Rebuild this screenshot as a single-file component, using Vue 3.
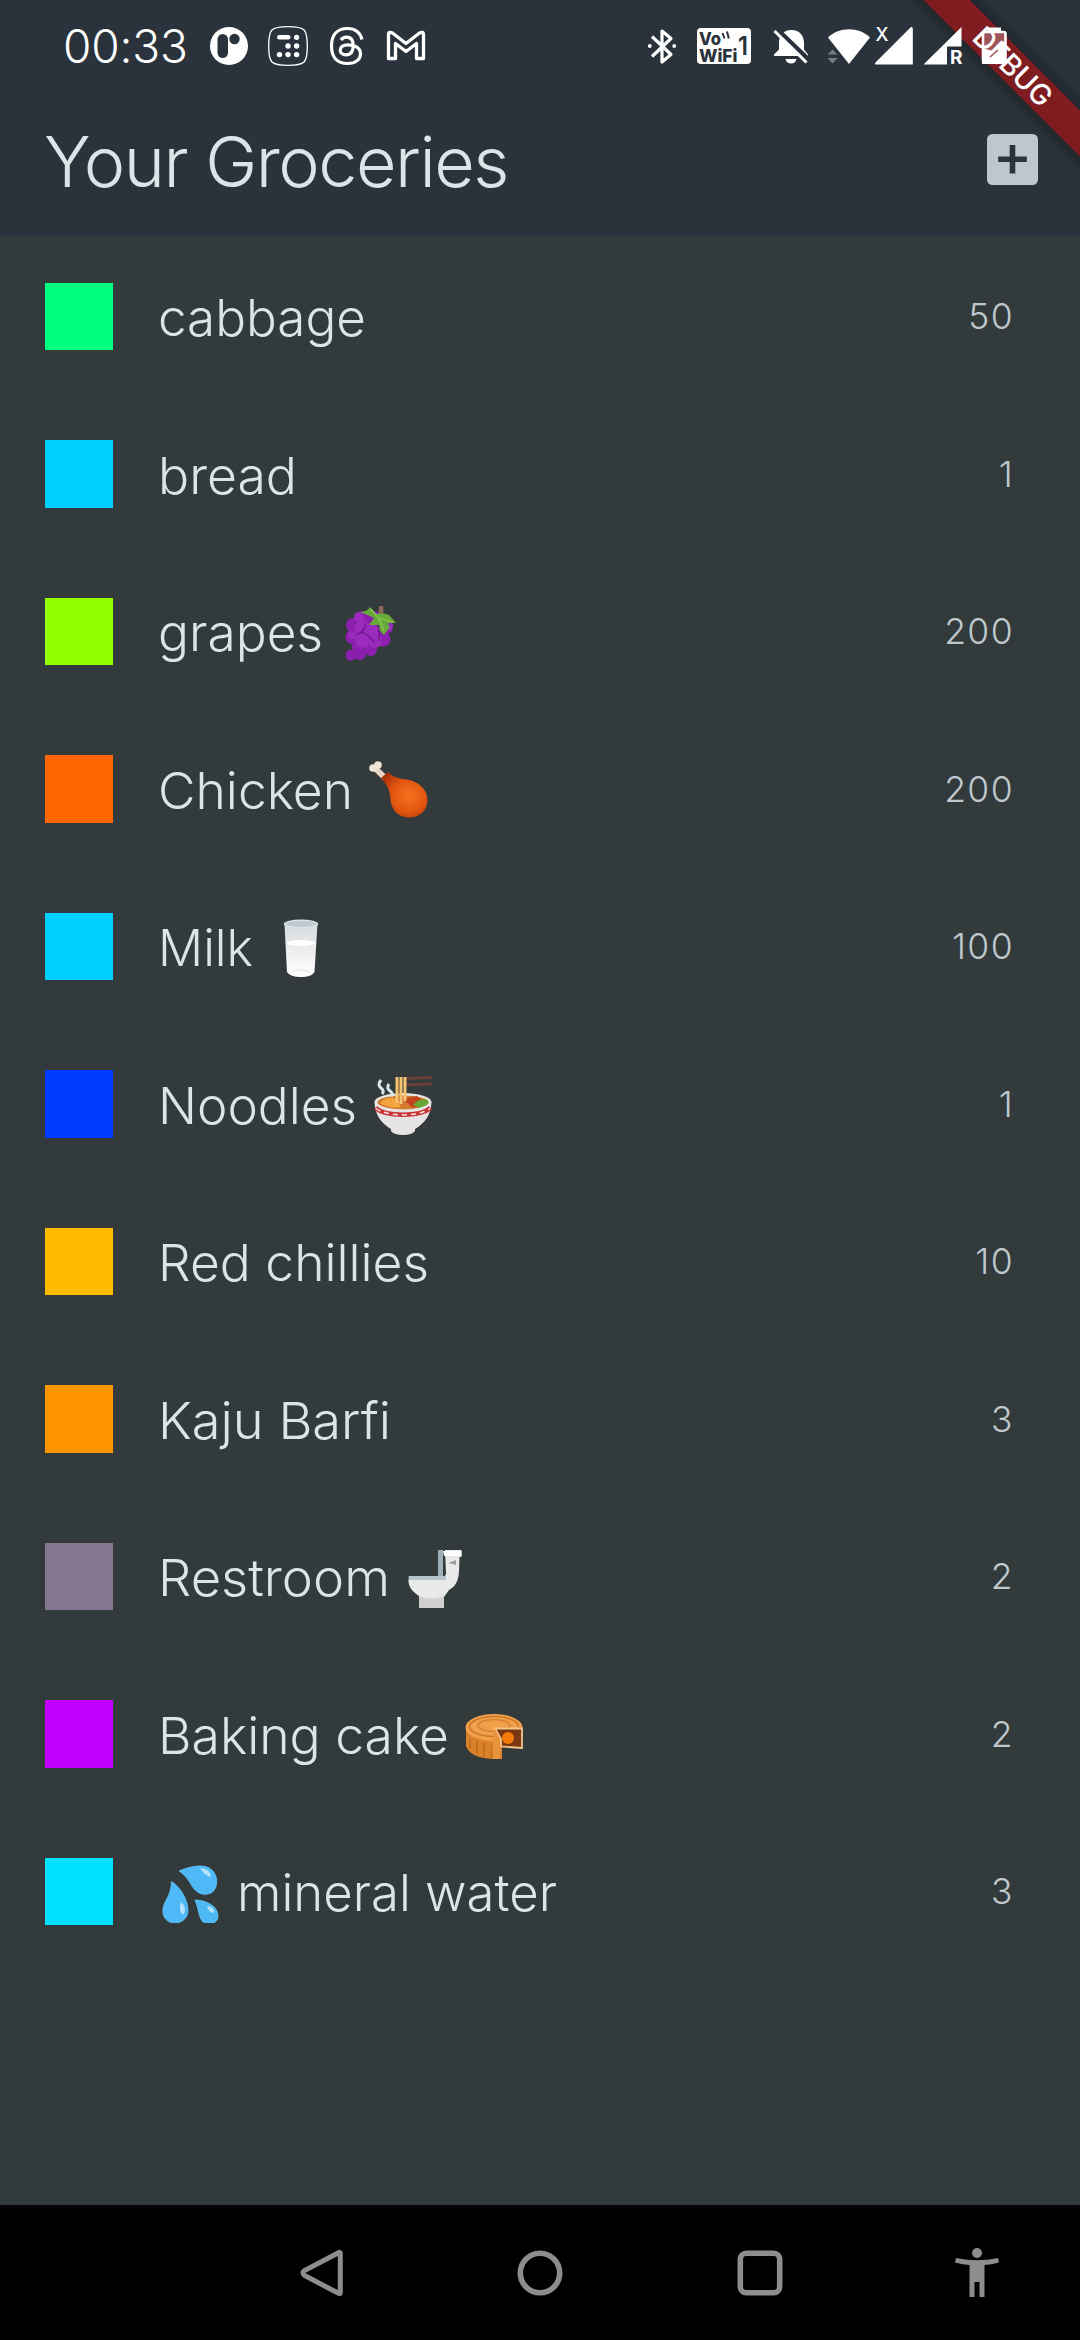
<script setup>
const groceries = [
  { name: 'cabbage', qty: 50, color: '#00ff80', width: 208 },
  { name: 'bread', qty: 1, color: '#00d0ff', width: 139 },
  { name: 'grapes', qty: 200, color: '#91ff00', width: 165, slot: 183.5, icon: 'grapes' },
  { name: 'Chicken', qty: 200, color: '#ff6600', width: 195, slot: 211.5, icon: 'chicken' },
  { name: 'Milk', qty: 100, color: '#00d0ff', width: 95, slot: 113.5, icon: 'milk' },
  { name: 'Noodles', qty: 1, color: '#003cff', width: 199, slot: 215.5, icon: 'noodles' },
  { name: 'Red chillies', qty: 10, color: '#ffbb00', width: 271 },
  { name: 'Kaju Barfi', qty: 3, color: '#ff9500', width: 233 },
  { name: 'Restroom', qty: 2, color: '#857690', width: 232, slot: 248.5, icon: 'toilet' },
  { name: 'Baking cake', qty: 2, color: '#bf00ff', width: 291, slot: 307.5, icon: 'cake' },
  { name: 'mineral water', qty: 3, color: '#00e1ff', width: 320, icon: 'drops', lead: true },
]
</script>

<template>
  <div class="screen">
    <div class="banner"><span>DEBUG</span></div>

    <header class="top">
      <div class="status">
        <span class="time">00:33</span>
        <div class="notes">
          <svg width="40" height="44" viewBox="209 24 40 44">
            <circle cx="229" cy="46" r="19" fill="#fff" />
            <rect x="217.500" y="34" width="10.500" height="24" rx="5.250" fill="#2a333b" />
            <circle cx="234.500" cy="39" r="5.200" fill="#2a333b" />
          </svg>
          <svg width="42" height="44" viewBox="267 24 42 44">
            <path d="M268.700 46C268.700 29 271 26.600 288 26.600S307.300 29 307.300 46 305 65.400 288 65.400 268.700 63 268.700 46Z" fill="none" stroke="#fff" stroke-width="1.300" />
            <g fill="#fff">
              <rect x="277" y="35" width="13.500" height="4.600" rx="2.300" />
              <circle cx="296.600" cy="37.300" r="2.600" />
              <circle cx="288" cy="46" r="2.700" /><circle cx="296.600" cy="46" r="2.700" />
              <circle cx="279.500" cy="54.600" r="2.700" /><circle cx="288" cy="54.600" r="2.700" /><circle cx="296.600" cy="54.600" r="2.700" />
            </g>
          </svg>
          <svg width="40" height="44" viewBox="327 24 40 44">
            <path d="M362 39.500C360 32 355 28.500 347.500 28.500 337 28.500 331.500 35 331.500 46S337 63.500 347.500 63.500C356 63.500 360.500 59 360.500 54 360.500 47.500 354 44.800 348 44.800 343 44.800 340.200 47 340.200 50.200 340.200 53 342.800 54.800 346 54.800 351 54.800 353.200 51.500 353.200 45.500 353.200 40 351 37.200 346.500 37.200 344 37.200 342.200 38.200 341 40" fill="none" stroke="#fff" stroke-width="3.200" />
          </svg>
          <svg width="42" height="44" viewBox="385 24 42 44">
            <path d="M388.500 58.500V34.500Q388.500 31 392.500 33L406 43.500 419.500 33Q423.500 31 423.500 34.500V58.500H416.500V43.500L406 51.500 395.500 43.500V58.500Z" fill="none" stroke="#fff" stroke-width="3.300" stroke-linejoin="round" />
          </svg>
        </div>
        <div class="system">
          <svg width="30" height="44" viewBox="647 24 30 44">
            <path d="M652 36.500 671 54.500 662 62V31L671 38.500 652 56.500" fill="none" stroke="#fff" stroke-width="3.200" stroke-linejoin="round" />
            <circle cx="649.800" cy="46" r="1.900" fill="#fff" /><circle cx="674.200" cy="46" r="1.900" fill="#fff" />
          </svg>
          <svg width="56" height="44" viewBox="696 24 56 44">
            <rect x="697" y="28" width="54" height="36" rx="4" fill="#fff" />
            <g fill="#2a333b" font-family="Inter, sans-serif" font-weight="800">
              <text x="699" y="44.500" font-size="18" textLength="22" lengthAdjust="spacingAndGlyphs">Vo</text>
              <text x="699" y="61.500" font-size="18" textLength="38.500" lengthAdjust="spacingAndGlyphs">WiFi</text>
              <text x="738" y="54.500" font-size="25" textLength="10" lengthAdjust="spacingAndGlyphs" font-weight="600">1</text>
            </g>
            <path d="M722.500 33l2 5.500M727 31.500l1.800 7" stroke="#2a333b" stroke-width="2" />
          </svg>
          <svg width="38" height="44" viewBox="772 24 38 44">
            <path d="M774 56V54.500L779 49.500V43C779 35.500 783 30 791.500 30S804 36 804 43V49.500L808 54.500V56Z" fill="#fff" />
            <path d="M785.500 59h11c-.8 6-10.200 6-11 0Z" fill="#fff" />
            <path d="M777 29 809 60" stroke="#2a333b" stroke-width="4.500" />
            <path d="M774.500 31 806.500 62.500" stroke="#fff" stroke-width="3" />
          </svg>
          <svg width="44" height="44" viewBox="827 24 44 44">
            <path d="M828 37.500C839 26.500 859 26.500 870 37.500L849 64Z" fill="#fff" />
            <path d="M827.500 54.500 832.500 49.500 837.500 54.500ZM827.500 58 832.500 63.500 837.500 58Z" fill="#777d82" />
          </svg>
          <svg width="40" height="44" viewBox="874 24 40 44">
            <path d="M911 27Q912.800 26.500 912.800 29V64.500H877Q873.500 64.500 876 62Z" fill="#fff" />
            <text x="875.500" y="41" font-family="Inter, sans-serif" font-size="18.500" font-weight="500" fill="#fff" textLength="13" lengthAdjust="spacingAndGlyphs">X</text>
          </svg>
          <svg width="42" height="44" viewBox="922 24 42 44">
            <path d="M961.500 27V46.500H947V64.500H923.500Z" fill="#fff" />
            <text x="950" y="64" font-family="Inter, sans-serif" font-size="18.500" font-weight="700" fill="#fff" textLength="12.500" lengthAdjust="spacingAndGlyphs">R</text>
          </svg>
          <svg width="30" height="44" viewBox="979 24 30 44">
            <path d="M988 27.500h13v4h-13z" fill="#fff" />
            <rect x="983" y="32" width="22.500" height="30.500" rx="2" fill="#fff" fill-opacity=".25" stroke="#fff" stroke-width="2.600" />
            <path d="M982 48 993 51 999 43 1006 41V64H982Z" fill="#fff" />
            <path d="M990 57 998 50" stroke="#9c5055" stroke-width="1.600" />
          </svg>
        </div>
      </div>
      <div class="appbar">
        <h1>Your Groceries</h1>
        <svg class="add" width="51" height="51" viewBox="0 0 51 51">
          <rect width="51" height="51" rx="5.500" fill="#c0c7cc" />
          <path d="M25.500 11V39.500M11.200 25.300H39.800" stroke="#2a333b" stroke-width="5.600" />
        </svg>
      </div>
    </header>

    <main class="list">
      <div v-for="item in groceries" :key="item.name" class="row" :class="{ lead: item.lead }">
        <i class="swatch" :style="{ background: item.color }"></i>
        <svg class="name" :width="item.slot || item.width" height="70">
          <text x="0" y="54.500" :textLength="item.width" lengthAdjust="spacingAndGlyphs">{{ item.name }}</text>
        </svg>
        <svg v-if="item.icon === 'grapes'" class="emoji" viewBox="0 0 60 60">
          <g fill="#8d1fae">
            <circle cx="12" cy="22" r="7" /><circle cx="21" cy="15" r="7" /><circle cx="33" cy="16" r="8" /><circle cx="45" cy="24" r="7" />
            <circle cx="12" cy="34" r="7.500" /><circle cx="18" cy="43" r="7" /><circle cx="10" cy="52" r="5.500" /><circle cx="30" cy="47" r="6" /><circle cx="42" cy="36" r="7.500" /><circle cx="19" cy="51" r="6" />
          </g>
          <g fill="#9b2bbd">
            <circle cx="21" cy="25" r="7.500" /><circle cx="30" cy="29" r="8.500" /><circle cx="22" cy="37" r="8" /><circle cx="34" cy="38" r="7" /><circle cx="18" cy="14" r="5" /><circle cx="47" cy="23" r="5" /><circle cx="11" cy="32" r="4" />
          </g>
          <path d="M16 32q4-5 10 0t8 8M24 20q1 6-5 10M37 27q3 5 0 11" stroke="#6f168e" stroke-width="1.300" fill="none" />
          <path d="M40 3V15" stroke="#8a6857" stroke-width="4.500" />
          <path d="M19 9Q26 9 29 4L35 11Q43 9 48 12L55 20 48 20Q46 22 49 24L43 32Q38 29 38 22L28 22 33 15Q27 12 19 9Z" fill="#67a83a" />
          <path d="M30 6 38 16 43 28M38 15 52 19" stroke="#82c54c" stroke-width="1.800" fill="none" />
        </svg>
        <svg v-else-if="item.icon === 'chicken'" class="emoji" viewBox="0 0 60 60">
          <defs><radialGradient id="leg" cx=".6" cy=".52" r=".65"><stop offset="0" stop-color="#f5741f" /><stop offset=".55" stop-color="#e2550f" /><stop offset="1" stop-color="#a93108" /></radialGradient></defs>
          <path d="M6 8 17 19" stroke="#e8d5c3" stroke-width="6" /><circle cx="4" cy="8" r="3.800" fill="#f2e5d7" /><circle cx="9" cy="5" r="3.800" fill="#f2e5d7" />
          <path d="M12 18 19 12Q24 18 37 19.500C50 21 59 30 58.500 41 58 52 49 58 39 57.500 28 57 22 49 21.500 39 21 30 18 25 12 18Z" fill="url(#leg)" />
        </svg>
        <svg v-else-if="item.icon === 'milk'" class="emoji" viewBox="0 0 60 60">
          <defs><linearGradient id="glass" x2="0" y2="1"><stop offset="0" stop-color="#d5d9dc" /><stop offset=".5" stop-color="#eeeeef" /><stop offset="1" stop-color="#fff" /></linearGradient></defs>
          <path d="M13.500 6 16 54Q19 59 30 59T43.500 54L46.500 6Z" fill="url(#glass)" />
          <ellipse cx="30" cy="6" rx="16.500" ry="3.700" fill="#bdc7ce" stroke="#dde4e9" stroke-width="1.400" />
          <ellipse cx="30" cy="25" rx="14.500" ry="3" fill="#fff" />
          <path d="M21 54q9-4 18 0" stroke="#e3e3e3" stroke-width="1.200" fill="none" />
        </svg>
        <svg v-else-if="item.icon === 'noodles'" class="emoji" viewBox="0 0 60 60">
          <path d="M30 3.500 59 2.500M30 10 59 9" stroke="#684136" stroke-width="3" />
          <ellipse cx="30" cy="27" rx="28.500" ry="9" fill="#e9e5df" /><ellipse cx="30" cy="27.500" rx="25.500" ry="7" fill="#d4792c" />
          <path d="M30 24 44 21 53 28 40 33Z" fill="#c2441d" /><path d="M40 30q6-7 15-5 2 6-8 8Z" fill="#65a832" />
          <path d="M7 28q8-8 17-4l4 8q-12 2-21-4Z" fill="#f4a43c" />
          <path d="M24 2V28M28 2V29M32 2V26" stroke="#f3c376" stroke-width="3" /><path d="M26 5V25" stroke="#c68b3d" stroke-width="1" />
          <path d="M8 5q-4 5 0 8t1 6M16 9q-3 4 1 7t1 5" stroke="#d9e8ef" stroke-width="3" fill="none" />
          <path d="M1.500 27C12 37 48 37 58.500 27 58 40 52 48 42 54V56Q39 60 30 60T18 56V54C8 48 2 40 1.500 27Z" fill="#e6e3e3" />
          <path d="M2.500 33C13 42 47 42 57.500 33" stroke="#c93437" stroke-width="4.500" fill="none" /><path d="M3 33.500C14 42 46 42 57 33.500" stroke="#f6e5e2" stroke-width="1.500" stroke-dasharray="5 4" fill="none" />
        </svg>
        <svg v-else-if="item.icon === 'toilet'" class="emoji" viewBox="0 0 60 60">
          <path d="M32 2H37V30H32Z" fill="#9fb0bb" />
          <path d="M39 2H55.500V9H53.500C53 26 54 36 43 42L38 49V60H13V48C5 43 2 37 2.500 31H37L40 26Z" fill="#e9e9ea" />
          <path d="M2.500 28H40V32H3Z" fill="#b4c3cc" /><path d="M13 48Q25 53 38 48V60H13Z" fill="#d0d0d1" /><path d="M42 15 50 12V17Z" fill="#9ba0a2" /><path d="M37 3H55.500V8H38Z" fill="#fff" />
        </svg>
        <svg v-else-if="item.icon === 'cake'" class="emoji" viewBox="0 0 60 60">
          <path d="M1 24V41Q5 53 28 54H37V42H57V22Z" fill="#d9822b" />
          <ellipse cx="29" cy="22.500" rx="28.500" ry="13.500" fill="#f1a04a" />
          <ellipse cx="29" cy="21.500" rx="24.500" ry="10" fill="none" stroke="#cb7829" stroke-width="1.600" /><ellipse cx="29" cy="20.500" rx="16" ry="6" fill="none" stroke="#d58433" stroke-width="1.600" />
          <path d="M5 33V44M12 36V49M19 38V52M27 38V53" stroke="#bd6a20" stroke-width="1.500" />
          <path d="M30 23.500H57V43L36 41.500V34Z" fill="#7a3711" stroke="#f4c488" stroke-width="1.800" /><circle cx="43" cy="33" r="6" fill="#f47a0b" />
          <path d="M30 23.500 35 34V54H28L27 34Z" fill="#e8943d" />
        </svg>
        <svg v-else-if="item.icon === 'drops'" class="emoji" viewBox="0 0 60 60">
          <g fill="#4fb9f7" stroke="#63c6fa" stroke-width=".8">
            <path d="M18 8C32 2 45 1 51 7 58 14 57 26 50 30 43 33 36 31 31 23 27 16 24 12 18 8Z" />
            <path d="M10.500 18.500C18 23 27 36 27 47 27 55 21 60 14 60 6 60 1 54 2 46 3 37 10 34 10.500 18.500Z" />
            <path d="M34 37C43 37 57 42 57 53 57 58 53 61 48 61 37 61 39 48 34 37Z" />
          </g>
          <g fill="#b5e3fb"><path d="M39 5Q50 6 50 14 44 13 39 5Z" /><path d="M20 39Q27 45 22 52 17 48 20 39Z" /><path d="M46 43Q54 44 53 50 48 50 46 43Z" /></g>
        </svg>
        <span class="qty">{{ item.qty }}</span>
      </div>
    </main>

    <nav class="nav">
      <svg width="46" height="50" viewBox="299 2248 46 50"><path d="M340.300 2253.500V2292.500Q340.300 2294.500 338 2293L304.500 2275.500Q301.500 2273 304.500 2270.500L338 2253Q340.300 2251.500 340.300 2253.500Z" fill="none" stroke="#8d8d8d" stroke-width="5" /></svg>
      <svg width="46" height="50" viewBox="517 2248 46 50"><circle cx="540" cy="2273" r="19.700" fill="none" stroke="#8d8d8d" stroke-width="5.600" /></svg>
      <svg width="46" height="50" viewBox="737 2248 46 50"><rect x="740.300" y="2253.300" width="39.400" height="39.400" rx="6" fill="none" stroke="#8d8d8d" stroke-width="5.600" /></svg>
      <svg width="46" height="50" viewBox="953.500 2248 46 50"><g fill="#8d8d8d"><circle cx="976.500" cy="2253" r="5" /><path d="M955.500 2258Q976.500 2262.500 997.500 2258L998.500 2262.500Q991 2264.500 984 2265V2297H979V2282H974V2297H969V2265Q962 2264.500 954.500 2262.500Z" /></g></svg>
    </nav>
  </div>
</template>

<style>
body { margin: 0; background: #323a3c; }
</style>

<style scoped>
.screen {
  position: relative;
  display: flex;
  flex-direction: column;
  width: 1080px;
  height: 2340px;
  overflow: hidden;
  background: #323a3c;
  color: #dde4e8;
  font-family: Inter, "Liberation Sans", sans-serif;
  font-weight: 300;
}
svg { display: block; flex: none; }
.top { height: 236px; background: #2a333b; }
.status { display: flex; align-items: flex-start; height: 79px; box-sizing: border-box; padding: 24px 71px 0 63px; }
.time { width: 146px; font-size: 46px; line-height: 45px; letter-spacing: -.2px; color: #fff; }
.notes { display: flex; gap: 18px; }
.system { position: relative; z-index: 2; display: flex; margin-left: auto; }
.system svg:nth-child(2) { margin-left: 19px; }
.system svg:nth-child(3) { margin-left: 20px; }
.system svg:nth-child(4) { margin-left: 17px; }
.system svg:nth-child(5) { margin-left: 3px; }
.system svg:nth-child(6) { margin-left: 8px; }
.system svg:nth-child(7) { margin-left: 15px; }
.appbar { display: flex; align-items: center; justify-content: space-between; height: 157px; padding: 0 42px 0 44px; }
h1 { margin: 9px 0 0; font-size: 70px; line-height: 80px; font-weight: 300; letter-spacing: -1.500px; }
.add { margin-top: 3px; }
.banner {
  position: absolute;
  z-index: 1;
  left: 863px;
  top: 50px;
  width: 300px;
  height: 33px;
  transform: rotate(45deg);
  background: #7e1c20;
  box-shadow: 0 0 17px rgba(0, 0, 0, .5);
  text-align: center;
  color: #fff;
}
.banner span { font-size: 28.700px; line-height: 33px; font-weight: 500; letter-spacing: -.2px; }
.list { flex: 1; padding-top: 1.500px; }
.row { display: flex; align-items: center; height: 157.500px; box-sizing: border-box; padding: 0 66px 0 45px; }
.swatch { flex: none; width: 67.500px; height: 67.500px; }
.name { margin-left: 45px; overflow: visible; fill: #dde4e8; font-size: 51px; }
.emoji { width: 60px; height: 60px; margin-top: 3px; }
.lead .name { order: 2; margin-left: 16px; }
.lead .emoji { margin-left: 48px; order: 1; }
.qty { order: 3; margin-top: 2px; margin-left: auto; font-size: 35.500px; line-height: 44px; letter-spacing: 1.400px; font-weight: 300; color: #bfc8cc; }
.nav { display: flex; align-items: center; height: 135px; background: #000; padding-left: 299px; }
.nav svg:nth-child(2) { margin-left: 172px; }
.nav svg:nth-child(3) { margin-left: 174px; }
.nav svg:nth-child(4) { margin-left: 170.500px; }
</style>
